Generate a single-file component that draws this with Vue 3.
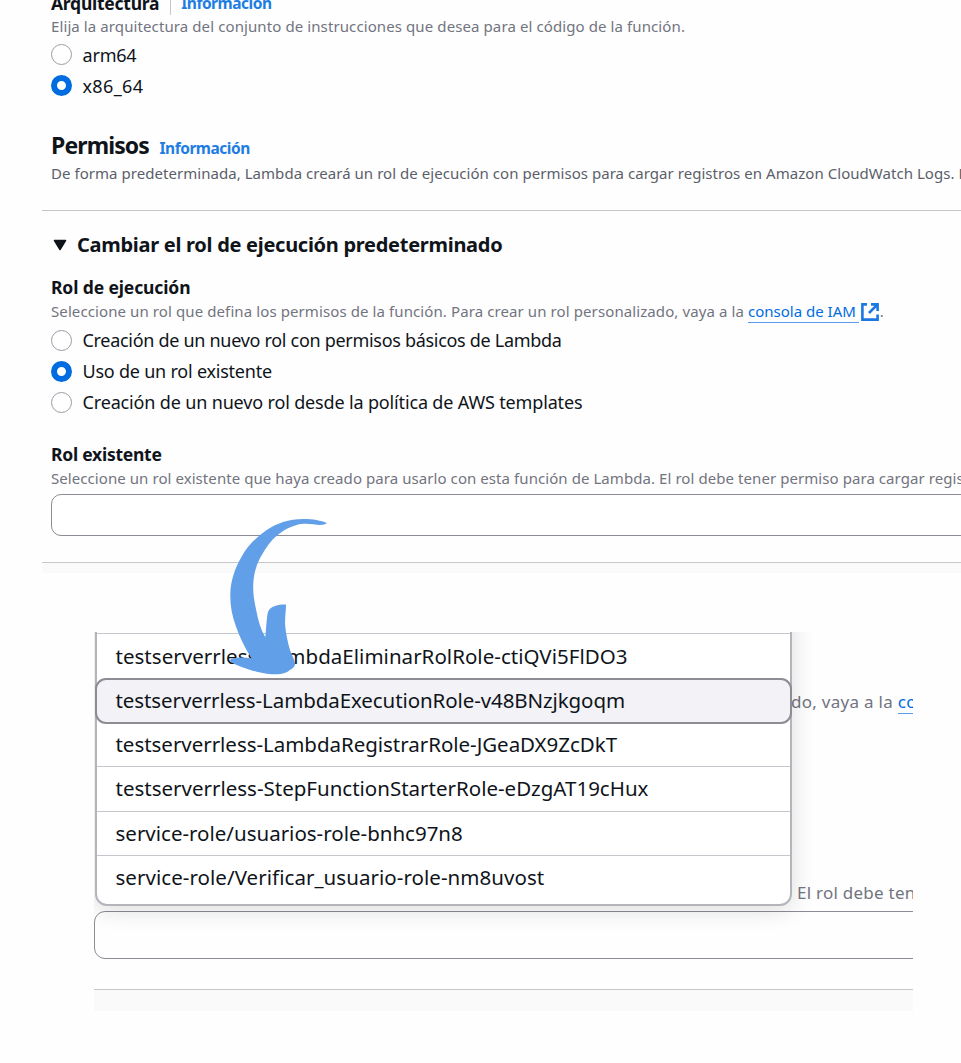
<script setup>
const archs = [
  { label: 'arm64', on: false, cls: 'r-arm' },
  { label: 'x86_64', on: true, cls: 'r-x86' },
]
const roles = [
  { label: 'Creación de un nuevo rol con permisos básicos de Lambda', on: false, cls: 'r-new' },
  { label: 'Uso de un rol existente', on: true, cls: 'r-use' },
  { label: 'Creación de un nuevo rol desde la política de AWS templates', on: false, cls: 'r-tpl' },
]
const options = [
  { label: 'testserverrless-LambdaEliminarRolRole-ctiQVi5FlDO3', cls: 'o1' },
  { label: 'testserverrless-LambdaExecutionRole-v48BNzjkgoqm', cls: 'o2 active' },
  { label: 'testserverrless-LambdaRegistrarRole-JGeaDX9ZcDkT', cls: 'o3' },
  { label: 'testserverrless-StepFunctionStarterRole-eDzgAT19cHux', cls: 'o4' },
  { label: 'service-role/usuarios-role-bnhc97n8', cls: 'o5' },
  { label: 'service-role/Verificar_usuario-role-nm8uvost', cls: 'o6' },
]
</script>

<template>
  <main class="page">
    <section class="arch">
      <div class="label arch-title">
        <span class="t-arq">Arquitectura</span><i class="sep"></i><a class="info i1">Información</a>
      </div>
      <p class="hint h1">Elija la arquitectura del conjunto de instrucciones que desea para el código de la función.</p>
      <div class="radios">
        <div v-for="a in archs" :key="a.label" class="radio">
          <span class="dot" :class="{ on: a.on }"></span><span :class="a.cls">{{ a.label }}</span>
        </div>
      </div>
    </section>

    <section class="perm">
      <div class="perm-title"><h2>Permisos</h2><a class="info i2">Información</a></div>
      <p class="hint dark h2t">De forma predeterminada, Lambda creará un rol de ejecución con permisos para cargar registros en Amazon CloudWatch Logs. P</p>
    </section>

    <section class="role">
      <h3><svg width="14" height="12" viewBox="0 0 14 12"><path d="M1.500 1.500H12.500L7 10.500Z" fill="#0f141a" stroke="#0f141a" stroke-width="1.5" stroke-linejoin="round" /></svg><span>Cambiar el rol de ejecución predeterminado</span></h3>
      <div class="label"><span class="t-rol">Rol de ejecución</span></div>
      <p class="hint h3t"><span class="lead">Seleccione un rol que defina los permisos de la función. Para crear un rol personalizado, vaya a la </span><a class="link">consola de IAM</a><svg class="ext" width="20" height="20" viewBox="0 0 20 20" fill="none" stroke="#1a78e2" stroke-width="2.6"><path d="M7 2.400H2.400V17.600H17.600V12.500M11 2.400H17.600V9M17.300 2.700L9 11" /></svg><span>.</span></p>
      <div class="radios">
        <div v-for="r in roles" :key="r.label" class="radio">
          <span class="dot" :class="{ on: r.on }"></span><span :class="r.cls">{{ r.label }}</span>
        </div>
      </div>
      <div class="label existing"><span class="t-ex">Rol existente</span></div>
      <p class="hint h4t">Seleccione un rol existente que haya creado para usarlo con esta función de Lambda. El rol debe tener permiso para cargar regis</p>
      <div class="field"></div>
    </section>
    <div class="band"></div>

    <section class="inset">
      <p class="hint big side1">do, vaya a la <a class="link">co</a></p>
      <p class="hint big side2">El rol debe ten</p>
      <div class="field2"></div>
      <div class="band2"></div>
      <div class="menu">
        <div v-for="o in options" :key="o.label" class="option" :class="o.cls"><span>{{ o.label }}</span></div>
      </div>
    </section>

    <svg class="arrow" width="100" height="160" viewBox="0 0 100 160">
      <path fill="#619fe8" d="M97.700 4C92 1.500 84 0 74.300 0C60 0 47 4.500 37.700 11C27.500 18 18.500 27 13 37C5.500 50 1.500 62 1.300 76C1.200 87 3 97 7 107.500C10.500 117.500 15.500 128.500 22.500 139.300C16 138 8 138.300 4.300 139.300C.5 140.500 .3 142 2.500 143.500C9 147 19 150.500 27.700 152.700C35 154.500 42 155.500 49.300 155.300C54 155 58 153.500 61 151C65 148.500 66.300 147 66 144.300C65.500 140 62.500 136 61 131C58.500 122 57 115 56.300 107.700C55.500 100 57 93 57 85.500C53.500 85.300 50 85.700 46 87C41.500 88.500 39 91 38.500 95C37.500 102 37 110 36.300 118.300C31.500 110 29 101 27.200 91C25 81 23.800 73 24.300 64.300C25 53 28 43 34.300 33.500C38.500 26.500 44 19 51 14.300C56 10.500 61.500 7.500 67.700 6C73 4.500 79 4.700 84.300 5.300C90 6.300 96 6.300 97.700 4Z" />
    </svg>
  </main>
</template>

<style>
body { margin: 0; background: #fefefe; }
</style>

<style scoped>
.page {
  position: relative;
  width: 961px;
  height: 1063px;
  overflow: hidden;
  background: #fefefe;
  color: #0f141a;
  font-family: "Noto Sans", "Open Sans", sans-serif;
  font-size: 18px;
  white-space: nowrap;
}
h2, h3, p { margin: 0; }
section { box-sizing: border-box; }
.arch { padding-left: 51px; margin-top: -12px; height: 142px; }
.label { display: flex; align-items: center; height: 28px; line-height: 28px; font-size: 17.5px; font-weight: 700; }
.arch-title { line-height: 30px; }
.arch-title span, .arch-title a { padding-top: 2px; }
.t-arq { letter-spacing: -.25px; }
.sep { width: 1px; height: 26px; background: #c6c6cd; margin: 0 10px 0 11px; }
.info { color: #006ce0; font-size: 15.500px; font-weight: 700; opacity: .88; letter-spacing: -.48px; }
.hint { height: 20px; line-height: 20px; font-size: 15px; color: #72747e; }
.hint.dark { color: #5b5e69; }
.h1, .lead { letter-spacing: .1px; }
.h2t { letter-spacing: .045px; }
.h4t { letter-spacing: .07px; }
.radios { padding-top: 3px; }
.radio { display: flex; align-items: center; height: 31px; line-height: 30px; gap: 11px; }
.arch .radio { line-height: 28px; }
.r-arm { letter-spacing: -.2px; }
.r-x86 { letter-spacing: .35px; }
.r-new { letter-spacing: -.3px; }
.r-use { letter-spacing: -.22px; }
.r-tpl { letter-spacing: -.155px; }
.dot { box-sizing: border-box; width: 21px; height: 21px; margin: 1px -.5px 0 0; border: 1.5px solid #9a9ca5; border-radius: 50%; background: #fff; }
.arch .dot { margin-top: 0; }
.dot.on { border: 6px solid #006ce0; }
.perm { padding-left: 51px; height: 80px; }
.perm-title { display: flex; height: 33px; line-height: 30px; gap: 10.500px; }
.perm-title h2 { font-size: 23px; letter-spacing: -.88px; }
.perm-title .info { padding-top: 3px; }
.role { margin-left: 42px; padding: 19px 0 0 9px; height: 352px; border-top: 1px solid #c6c6cd; }
h3 { display: flex; align-items: center; height: 30px; line-height: 30px; font-size: 20px; gap: 10px; padding-left: 2px; margin-bottom: 13px; letter-spacing: -.28px; }
.t-rol { letter-spacing: -.12px; }
.t-ex { letter-spacing: -.25px; }
.link { color: #006ce0; border-bottom: 1.5px solid #5a9bea; }
.h3t { display: flex; white-space: pre; }
.h3t .link { height: 21px; padding-right: 3px; }
.ext { margin: 1px 0 0 1px; }
.existing { margin-top: 23px; }
.field { height: 40px; width: 1000px; margin-top: 6px; border: 1.5px solid #8c8c94; border-radius: 10px; background: #fff; }
.band { margin-left: 42px; height: 10px; border-top: 1px solid #c6c6cd; background: #fafafa; }
.inset { position: absolute; left: 94px; top: 632px; width: 819px; height: 379px; overflow: hidden; background: #fefefe; }
.big { position: absolute; font-size: 17px; }
.side1 { left: 697px; top: 60px; letter-spacing: .28px; }
.side2 { left: 703px; top: 251px; letter-spacing: .25px; }
.field2 { position: absolute; left: 0; top: 279px; width: 900px; height: 46px; border: 1.5px solid #8c8c94; border-radius: 11px; }
.band2 { position: absolute; left: 0; right: 0; top: 357px; height: 21px; border-top: 1px solid #c6c6cd; background: #fafafa; }
.menu {
  position: absolute; left: 1px; top: -30px; width: 697px; height: 304px; padding-top: 29px; box-sizing: border-box;
  border: 2px solid #b4b4bb; border-radius: 12px; background: #fff; box-shadow: 0 3px 24px rgba(0, 7, 22, .14);
}
.option { box-sizing: border-box; height: 44.300px; line-height: 42px; padding-left: 18.500px; border-top: 1px solid #c6c6cd; font-size: 20.500px; }
.option.active { position: relative; margin: 0 -2px -1.400px; top: .5px; height: 46px; line-height: 41px; border: 2px solid #8c8c94; border-radius: 11px; background: #f2f2f7; }
.option.active + .option { border-top-color: transparent; }
.option.o1 { line-height: 44px; letter-spacing: .03px; }
.o2 { letter-spacing: -.09px; }
.option.o3 { line-height: 43px; letter-spacing: -.03px; }
.o6 { letter-spacing: .05px; }
.arrow { position: absolute; left: 229px; top: 519px; overflow: visible; }
</style>
